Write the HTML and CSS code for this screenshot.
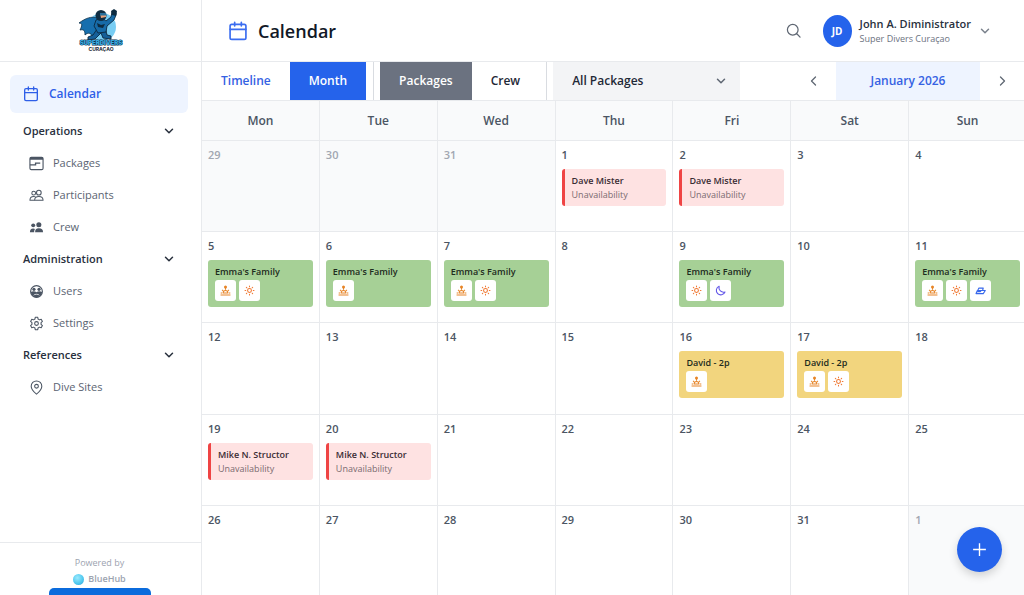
FILE: index.html
```html
<!DOCTYPE html>
<html lang="en">
<head>
<meta charset="utf-8">
<title>Calendar</title>
<link rel="stylesheet" href="styles.css">
</head>
<body>
<svg class="sprite" aria-hidden="true">
  <symbol id="calendar" viewBox="0 0 24 24"><g fill="none" stroke="currentColor" stroke-width="2" stroke-linecap="round" stroke-linejoin="round"><rect x="2.500" y="4" width="19" height="18" rx="2"/><path d="M2.500 10h19M8 1.500v4.500M16 1.500v4.500"/></g></symbol>
  <symbol id="down" viewBox="0 0 12 12"><path d="M2.500 4.300 6 7.800l3.500-3.500" fill="none" stroke="currentColor" stroke-width="1.500" stroke-linecap="round" stroke-linejoin="round"/></symbol>
  <symbol id="package" viewBox="0 0 16 16"><rect x="1" y="1.500" width="14" height="13" rx="1.500" fill="none" stroke="currentColor" stroke-width="1.200"/><path d="M1 1.500h14v2.500H1z" fill="currentColor"/><path d="M1 9.500h6V7.500h5" fill="none" stroke="currentColor" stroke-width="1.400"/></symbol>
  <symbol id="people" viewBox="0 0 16 16"><g fill="none" stroke="currentColor" stroke-width="1.100" stroke-linejoin="round"><circle cx="10.500" cy="5" r="2.500"/><path d="M6 13c0-2.500 1.500-4 4.500-4s4.500 1.500 4.500 4z"/><circle cx="5" cy="5.500" r="2"/><path d="M6 13H1c0-2.500 1.200-4 4-4 .9 0 1.500.2 2 .5"/></g></symbol>
  <symbol id="crew" viewBox="0 0 16 16"><g fill="currentColor"><circle cx="10.500" cy="5" r="2.700"/><path d="M6.500 13c0-2.800 1-4.300 4-4.300s4.500 1.500 4.500 4.300z"/><circle cx="4.500" cy="5.700" r="2.100"/><path d="M1 13c0-2.600 1-4 3.500-4 .8 0 1.400.2 1.900.5-.7.900-.9 2-.9 3.500z"/></g></symbol>
  <symbol id="users" viewBox="0 0 16 16"><circle cx="8" cy="8" r="6.300" fill="none" stroke="currentColor" stroke-width="1.200"/><path d="M2 8.500c1.500-1 4.500-1 6 .2 1.500-1.200 4.500-1.200 6-.2-.2 3.500-2.800 5.800-6 5.800s-5.800-2.300-6-5.800z" fill="currentColor"/><circle cx="5.300" cy="5.700" r="1.700" fill="currentColor"/><circle cx="10.700" cy="5.700" r="1.700" fill="currentColor"/><path d="M5 12c.5-1.400 5.500-1.400 6 0" stroke="#fff" stroke-width=".8" fill="none"/></symbol>
  <symbol id="gear" viewBox="0 0 24 24"><g fill="none" stroke="currentColor" stroke-width="1.700" stroke-linejoin="round"><path d="M10 2h4l.5 2.900 2.300 1.300 2.700-1 2 3.500-2.200 1.900v2.800l2.200 1.900-2 3.500-2.700-1-2.300 1.300L14 22h-4l-.5-2.900-2.300-1.300-2.700 1-2-3.500 2.200-1.900v-2.800L2.500 8.700l2-3.500 2.700 1 2.300-1.300z"/><circle cx="12" cy="12" r="3"/></g></symbol>
  <symbol id="pin" viewBox="0 0 24 24"><g fill="none" stroke="currentColor" stroke-width="1.700"><path d="M12 22.500S20.500 16 20.500 10a8.500 8.500 0 0 0-17 0c0 6 8.500 12.500 8.500 12.500z"/><circle cx="12" cy="10" r="3"/></g></symbol>
  <symbol id="sunrise" viewBox="0 0 16 16"><circle cx="8" cy="2.800" r="2.200" fill="#e78426"/><g fill="none" stroke="#e78426" stroke-width="1.500" stroke-linejoin="round"><path d="M8 4v3M4.500 11.500a3.500 3.500 0 0 1 7 0zM.8 14.500h14.400M1 11.500h2M13 11.500h2M3 7l1.500 1.400M13 7l-1.500 1.400"/></g></symbol>
  <symbol id="sun" viewBox="0 0 16 16"><g fill="none" stroke="#f07832" stroke-width="1.500" stroke-linecap="round"><circle cx="8" cy="8" r="2.800"/><path d="M8 1.500v1M8 13.500v1M1.500 8h1M13.500 8h1M3.400 3.400l.7.700M11.900 11.900l.7.700M3.400 12.600l.7-.7M11.900 4.100l.7-.7"/></g></symbol>
  <symbol id="moon" viewBox="0 0 16 16"><path d="M6 1.800a6.500 6.500 0 1 0 8.500 8.400C9.500 11.500 4.500 7.500 6 1.800z" fill="none" stroke="#6357e8" stroke-width="1.600" stroke-linejoin="round"/></symbol>
  <symbol id="boat" viewBox="0 0 16 16"><path d="M1.500 12.500 3.500 8H15l-3 4.500zM4 8l1.500-3.500H12L11 8" fill="none" stroke="#3868eb" stroke-width="1.600" stroke-linejoin="round"/><path d="M2.500 10.500 4 8h6l-2 2.500z" fill="#3868eb"/></symbol>
</svg>
<div class="app">
  <aside class="sidebar">
    <div class="brand">
      <svg class="logo" viewBox="0 0 48 44" role="img" aria-label="Super Divers Curaçao">
        <circle cx="25" cy="18" r="14" fill="#79cdf3"/>
        <path d="M21 9C14 7 9 9 2 14c4 0 3 3 1 7 4-1 5 1 5 5 3-3 7-2 8 2l8-8z" fill="#176fae" stroke="#0b2e48" stroke-width=".8"/>
        <path d="m20 20-4 6-5 2v3l7-1 6-6 2 5 8 1v-3l-4-1-2-8z" fill="#155f99" stroke="#0b2840" stroke-width=".9"/>
        <path d="M19 11c4-2 8-1 10 1l5-4 1-5c2-2 5 0 4 3l-2 5-7 6-1 6-8 1-4-7z" fill="#176ba8" stroke="#0b2840" stroke-width=".9"/>
        <circle cx="24" cy="6.500" r="5.500" fill="#102e43"/><path d="M23 4h6v4l-5 1z" fill="#e7a27b"/><path d="M23 4h6v2.500h-6z" fill="#276f9b"/>
        <path d="m34 2 3-2 3 2-1 5-4-1zM20 14l4 2 4-1-2 4-5-1z" fill="#0d2b40"/>
        <text class="logo-name" x="24" y="36" text-anchor="middle">SUPERDIVERS</text>
        <text class="logo-place" x="24" y="42" text-anchor="middle">CURAÇAO</text>
      </svg>
    </div>
    <nav class="nav">
      <a class="nav-main" href="#"><svg><use href="#calendar"/></svg>Calendar</a>
      <button class="group">Operations<svg><use href="#down"/></svg></button>
      <a class="item" href="#"><svg><use href="#package"/></svg>Packages</a>
      <a class="item" href="#"><svg><use href="#people"/></svg>Participants</a>
      <a class="item" href="#"><svg><use href="#crew"/></svg>Crew</a>
      <button class="group">Administration<svg><use href="#down"/></svg></button>
      <a class="item" href="#"><svg><use href="#users"/></svg>Users</a>
      <a class="item" href="#"><svg><use href="#gear"/></svg>Settings</a>
      <button class="group">References<svg><use href="#down"/></svg></button>
      <a class="item" href="#"><svg><use href="#pin"/></svg>Dive Sites</a>
    </nav>
    <div class="powered">
      <span>Powered by</span>
      <strong><i class="ball"></i>BlueHub</strong>
      <div class="promo"></div>
    </div>
  </aside>
  <main class="main">
    <header class="header">
      <svg class="title-icon"><use href="#calendar"/></svg>
      <h1>Calendar</h1>
      <button class="search" aria-label="Search"><svg viewBox="0 0 16 16"><circle cx="7.200" cy="7.200" r="5.700"/><path d="m11.500 11.500 3.500 3.500"/></svg></button>
      <button class="account">
        <span class="avatar">JD</span>
        <span class="who"><strong>John A. Diministrator</strong><span>Super Divers Curaçao</span></span>
        <svg><use href="#down"/></svg>
      </button>
    </header>
    <div class="toolbar">
      <div class="tabs"><button class="tab timeline">Timeline</button><button class="tab month">Month</button></div>
      <div class="tabs"><button class="tab packages">Packages</button><button class="tab">Crew</button></div>
      <div class="filter"><select aria-label="Packages"><option>All Packages</option></select><svg><use href="#down"/></svg></div>
      <div class="pager">
        <button class="step" aria-label="Previous month"><svg viewBox="0 0 12 12"><path d="M7.500 2 3.500 6l4 4"/></svg></button>
        <button class="current">January 2026</button>
        <button class="step" aria-label="Next month"><svg viewBox="0 0 12 12"><path d="m4.500 2 4 4-4 4"/></svg></button>
      </div>
    </div>
    <table class="calendar">
      <thead><tr><th>Mon</th><th>Tue</th><th>Wed</th><th>Thu</th><th>Fri</th><th>Sat</th><th>Sun</th></tr></thead>
      <tbody>
        <tr>
          <td class="other"><time>29</time></td><td class="other"><time>30</time></td><td class="other"><time>31</time></td>
          <td><time>1</time><div class="away"><strong>Dave Mister</strong><span>Unavailability</span></div></td>
          <td><time>2</time><div class="away"><strong>Dave Mister</strong><span>Unavailability</span></div></td>
          <td><time>3</time></td><td><time>4</time></td>
        </tr>
        <tr>
          <td><time>5</time><div class="event green"><strong>Emma's Family</strong><div class="slots"><svg><use href="#sunrise"/></svg><svg><use href="#sun"/></svg></div></div></td>
          <td><time>6</time><div class="event green"><strong>Emma's Family</strong><div class="slots"><svg><use href="#sunrise"/></svg></div></div></td>
          <td><time>7</time><div class="event green"><strong>Emma's Family</strong><div class="slots"><svg><use href="#sunrise"/></svg><svg><use href="#sun"/></svg></div></div></td>
          <td><time>8</time></td>
          <td><time>9</time><div class="event green"><strong>Emma's Family</strong><div class="slots"><svg><use href="#sun"/></svg><svg><use href="#moon"/></svg></div></div></td>
          <td><time>10</time></td>
          <td><time>11</time><div class="event green"><strong>Emma's Family</strong><div class="slots"><svg><use href="#sunrise"/></svg><svg><use href="#sun"/></svg><svg><use href="#boat"/></svg></div></div></td>
        </tr>
        <tr>
          <td><time>12</time></td><td><time>13</time></td><td><time>14</time></td><td><time>15</time></td>
          <td><time>16</time><div class="event gold"><strong>David - 2p</strong><div class="slots"><svg><use href="#sunrise"/></svg></div></div></td>
          <td><time>17</time><div class="event gold"><strong>David - 2p</strong><div class="slots"><svg><use href="#sunrise"/></svg><svg><use href="#sun"/></svg></div></div></td>
          <td><time>18</time></td>
        </tr>
        <tr>
          <td><time>19</time><div class="away"><strong>Mike N. Structor</strong><span>Unavailability</span></div></td>
          <td><time>20</time><div class="away"><strong>Mike N. Structor</strong><span>Unavailability</span></div></td>
          <td><time>21</time></td><td><time>22</time></td><td><time>23</time></td><td><time>24</time></td><td><time>25</time></td>
        </tr>
        <tr><td><time>26</time></td><td><time>27</time></td><td><time>28</time></td><td><time>29</time></td><td><time>30</time></td><td><time>31</time></td><td class="other"><time>1</time></td></tr>
      </tbody>
    </table>
  </main>
</div>
<button class="add" aria-label="Add"><svg viewBox="0 0 16 16"><path d="M8 2v12M2 8h12"/></svg></button>
</body>
</html>
```
FILE: styles.css
```css
* { box-sizing: border-box; }
body { margin: 0; overflow: hidden; background: #fff; color: #1f2937; font: 12px/16px "Open Sans", "Noto Sans", sans-serif; }
button, select { margin: 0; padding: 0; border: 0; background: none; color: inherit; font: inherit; }
a { color: inherit; text-decoration: none; }
strong { font-weight: 600; }
svg { flex: none; width: 12px; height: 12px; }
.sprite { position: absolute; width: 0; height: 0; }
.app { display: flex; height: 100vh; }

.sidebar { display: flex; flex: none; flex-direction: column; width: 202px; border-right: 1px solid #e8eaed; }
.brand { display: flex; flex: none; align-items: center; justify-content: center; height: 62px; border-bottom: 1px solid #e8eaed; }
.logo { width: 48px; height: 44px; overflow: visible; }
.logo-name { fill: #38abe1; stroke: #0b2d46; stroke-width: 1px; paint-order: stroke; font: 900 6px Inter, sans-serif; }
.logo-place { fill: #1c2a35; font: 700 5px Inter, sans-serif; }
.nav { display: flex; flex: 1; flex-direction: column; min-height: 0; padding: 13px 13px 0 10px; }
.nav-main { display: flex; flex: none; align-items: center; gap: 10px; height: 38px; margin-bottom: 2px; padding: 0 13px; border-radius: 6px; background: #eef4ff; color: #2f5fe8; font-size: 12px; font-weight: 600; }
.nav-main svg { width: 16px; height: 16px; }
.group { display: flex; flex: none; align-items: center; justify-content: space-between; height: 32px; padding: 0 13px; color: #28303d; font-size: 11px; font-weight: 600; }
.item { display: flex; flex: none; align-items: center; gap: 9px; height: 32px; padding-left: 19px; color: #5b6472; font-size: 11px; }
.item svg { width: 15px; height: 15px; color: #4b5563; }
.powered { display: flex; flex: none; flex-direction: column; align-items: center; height: 53px; padding: 12px 2px 0 0; overflow: hidden; border-top: 1px solid #e8eaed; color: #9ca3af; font-size: 9px; }
.powered strong { display: flex; align-items: center; gap: 4px; }
.ball { width: 11px; height: 11px; border-radius: 50%; background: radial-gradient(circle at 40% 35%, #9ceafd, #4cc7ef 60%, #3097cf); }
.promo { flex: none; width: 102px; height: 30px; margin-top: 1px; border-radius: 5px; background: #0b6bdc; }

.main { display: flex; flex: 1; flex-direction: column; min-width: 0; overflow: hidden; }
.header { display: flex; flex: none; align-items: center; height: 62px; padding: 0 33px 0 26px; border-bottom: 1px solid #e8eaed; }
.title-icon { width: 20px; height: 20px; color: #3b6df0; }
h1 { margin: 0 auto 0 10px; color: #111827; font-size: 18px; line-height: 24px; font-weight: 600; }
.search { display: flex; margin-right: 22px; }
.search svg { width: 15px; height: 15px; }
.search svg, .step svg { fill: none; stroke: #5f6773; stroke-width: 1.3; stroke-linecap: round; stroke-linejoin: round; }
.account { display: flex; align-items: center; gap: 8px; }
.account > svg { color: #7b828d; }
.avatar { display: grid; place-items: center; width: 29px; height: 32px; border-radius: 50%; background: #2563eb; color: #fff; font-size: 10px; font-weight: 700; }
.who { display: flex; flex-direction: column; text-align: left; color: #6b7280; font-size: 9px; line-height: 15px; }
.who strong { color: #28303d; font-size: 11px; }

.toolbar { display: flex; flex: none; height: 39px; border-bottom: 1px solid #e8eaed; font-weight: 600; }
.tabs { display: flex; margin-right: 6px; padding-right: 7px; border-right: 1px solid #d9dce1; }
.tab { padding: 0 19px; }
.timeline { color: #3562e3; }
.month { background: #2563eb; color: #fff; }
.packages { background: #6b7280; color: #fff; }
.filter { display: grid; align-items: center; width: 187px; background: #f3f4f6; }
.filter select, .filter svg { grid-area: 1 / 1; }
.filter select { width: 100%; height: 100%; padding: 0 19px; appearance: none; }
.filter svg { justify-self: end; margin-right: 13px; color: #5f6773; pointer-events: none; }
.pager { display: flex; margin-left: auto; }
.step { display: grid; place-items: center; width: 44px; }
.current { width: 144px; background: #eef4ff; color: #3562e3; }

.calendar { display: grid; flex: 1; grid-template: 40px repeat(5, minmax(0, 1fr)) / repeat(7, minmax(0, 1fr)); min-height: 0; margin: 0 -3px -2px 0; }
.calendar thead, .calendar tbody, .calendar tr { display: contents; }
.calendar th, .calendar td { padding: 0; border: solid #e8eaed; border-width: 0 1px 1px 0; }
.calendar th { display: grid; place-items: center; background: #f9fafb; color: #4b5563; font-weight: 600; }
.calendar td { padding: 5px 6px; }
.calendar .other { background: #f9fafb; color: #a1a7b1; }
time { display: block; margin-bottom: 5px; color: #4b5563; font-size: 11px; line-height: 18px; font-weight: 600; }
.other time { color: inherit; }
.away, .event { border-radius: 3px; font-size: 9px; }
.away { display: flex; flex-direction: column; height: 37px; padding: 5px 7px; border-left: 3px solid #ef4444; background: #fee2e2; line-height: 14px; color: #7a6b70; }
.away strong { color: #3a2c34; }
.event { display: flex; flex-direction: column; height: 47px; padding: 4px 7px; color: #1d2b1d; }
.green { background: #a6d096; }
.gold { background: #f2d57e; }
.slots { display: flex; gap: 3px; }
.slots svg { width: 21px; height: 21px; padding: 5px; border-radius: 3px; background: #fff; }
.add { position: fixed; right: 22px; bottom: 23px; display: grid; place-items: center; width: 45px; height: 45px; border-radius: 50%; background: #2563eb; box-shadow: 0 4px 9px rgba(0, 0, 0, .16); }
.add svg { width: 17px; height: 17px; stroke: #fff; stroke-width: 1.3; }
```
